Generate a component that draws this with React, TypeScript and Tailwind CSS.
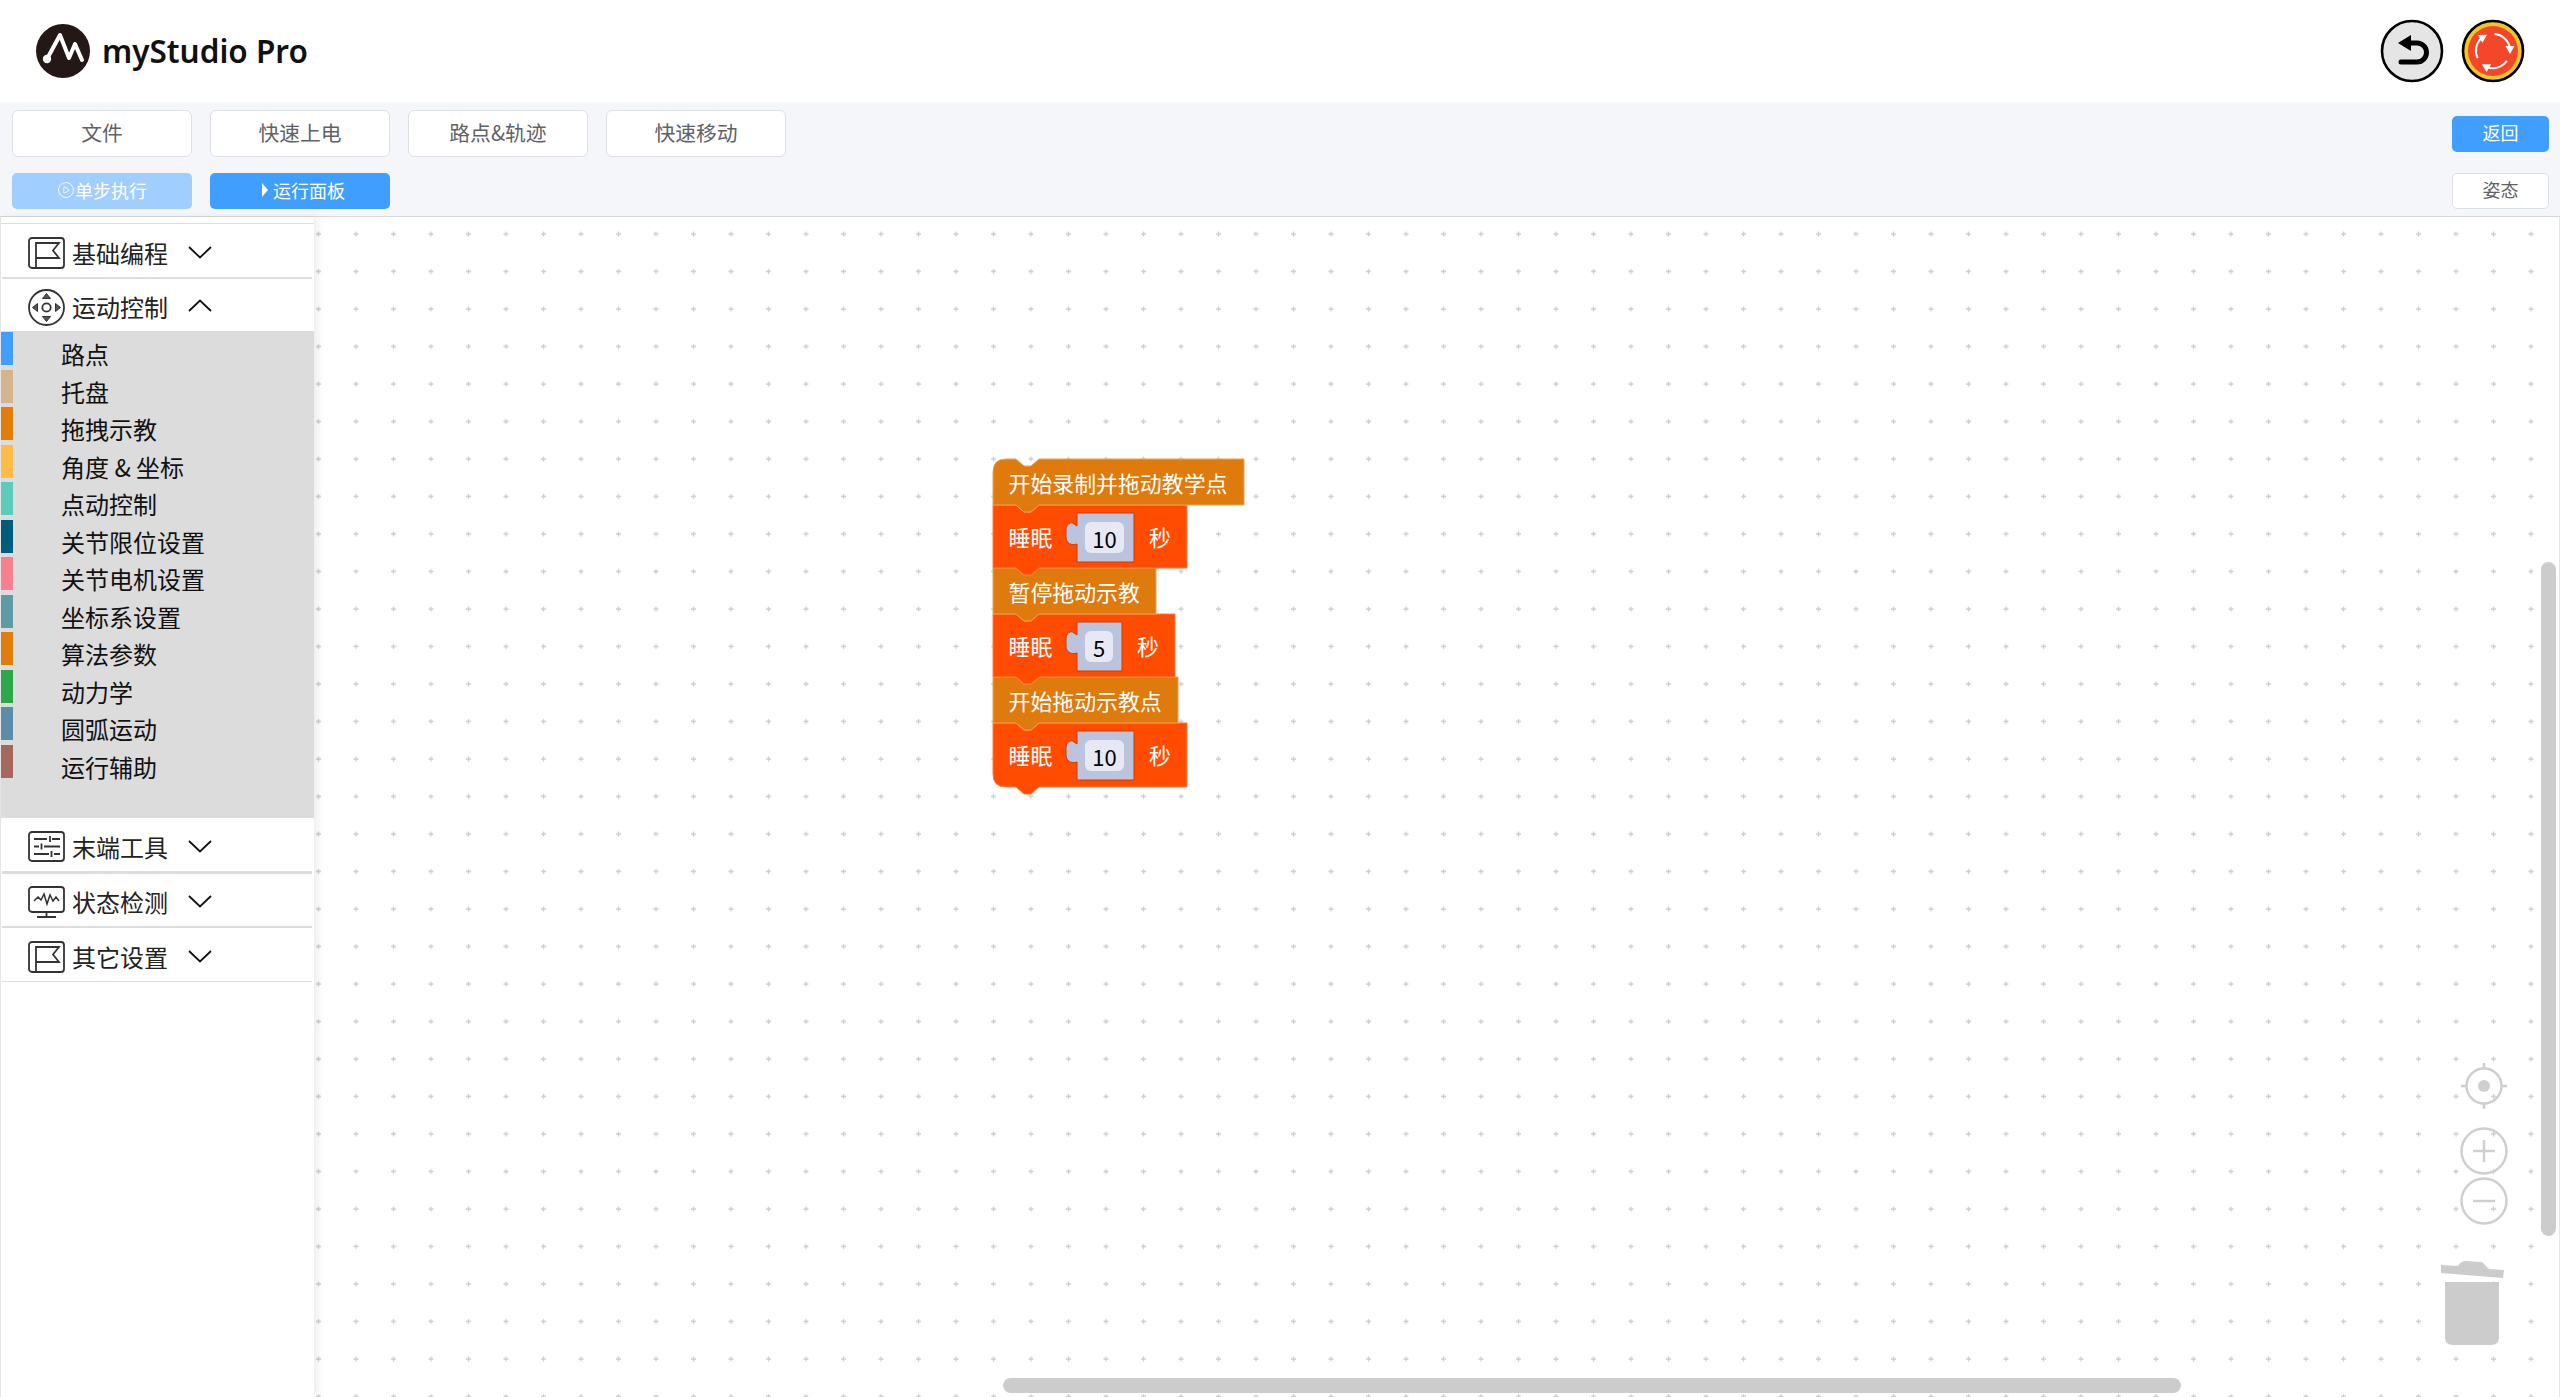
import React from 'react';
import { CirclePlay } from 'lucide-react';

const menuButtons = ['文件', '快速上电', '路点&轨迹', '快速移动'];

const categories = [
    { label: '路点', color: 'bg-[#409eff]' },
    { label: '托盘', color: 'bg-[#d3b48e]' },
    { label: '拖拽示教', color: 'bg-[#e27d0a]' },
    { label: '角度 & 坐标', color: 'bg-[#ffbb47]' },
    { label: '点动控制', color: 'bg-[#5dcbb9]' },
    { label: '关节限位设置', color: 'bg-[#005c7d]' },
    { label: '关节电机设置', color: 'bg-[#f77f90]' },
    { label: '坐标系设置', color: 'bg-[#5f9ba7]' },
    { label: '算法参数', color: 'bg-[#e17d0c]' },
    { label: '动力学', color: 'bg-[#2ca84a]' },
    { label: '圆弧运动', color: 'bg-[#5d8ca8]' },
    { label: '运行辅助', color: 'bg-[#a5675e]' },
];

const Logo = () => (
    <svg width="54" height="54" viewBox="-27 -27 54 54">
        <circle r="27" fill="#231815" />
        <path d="M-16 8 L-3 -16 L6 7 L12 -7 L19 9" fill="none" stroke="#fff" strokeWidth="4" strokeLinejoin="round" strokeLinecap="round" />
        <circle cx="-16" cy="8" r="4.200" fill="#fff" />
    </svg>
);

const UndoButton = () => (
    <svg width="64" height="64" viewBox="-32 -32 64 64">
        <circle r="30" fill="#e5e5e5" stroke="#000" strokeWidth="2.6" />
        <path d="M-6 -8 H5 A9.500 9.500 0 0 1 5 11 H-11" fill="none" stroke="#000" strokeWidth="5" strokeLinecap="round" />
        <path d="M-14 -8 L-1 -16 V0 Z" fill="#000" />
    </svg>
);

const ResetButton = () => (
    <svg width="64" height="64" viewBox="-32 -32 64 64">
        <circle r="30" fill="#f0c528" stroke="#000" strokeWidth="2.6" />
        <circle r="25" fill="#f4472a" />
        {[0, 120, 240].map((deg) => (
            <g key={deg} transform={`rotate(${deg})`}>
                <path d="M1.5 -16.9 A17 17 0 0 1 17 -3" fill="none" stroke="#fff" strokeWidth="2" />
                <path d="M12.500 -5 L21.500 -5 L17 3 Z" fill="#fff" />
            </g>
        ))}
    </svg>
);

const FlagIcon = () => (
    <svg width="37" height="32" viewBox="0 0 37 32" fill="none" stroke="#333" strokeWidth="1.8">
        <rect x="1" y="1" width="35" height="30" rx="3" />
        <path d="M8 31 V6 H31 L25 13.5 L31 21 H8" />
    </svg>
);

const DpadIcon = () => (
    <svg width="37" height="37" viewBox="-18.5 -18.5 37 37" fill="none" stroke="#333" strokeWidth="1.8">
        <circle r="17.5" />
        <circle r="4.2" />
        <path d="M0 -14 L4 -9 H-4 Z M0 14 L4 9 H-4 Z" fill="#555" strokeWidth="1" />
        <path d="M-14 0 L-9 -4 V4 Z M14 0 L9 -4 V4 Z" fill="#555" strokeWidth="1" />
    </svg>
);

const SlidersIcon = () => (
    <svg width="37" height="31" viewBox="0 0 37 31" fill="none" stroke="#333" strokeWidth="1.8">
        <rect x="1" y="1" width="35" height="29" rx="3" />
        <path d="M6 8 H19 M24 8 H32 M22 5 V11 M6 15.5 H11 M16 15.5 H32 M13.500 12.500 V18.500 M6 23 H21 M26 23 H32 M23.500 20 V26" />
    </svg>
);

const MonitorIcon = () => (
    <svg width="37" height="32" viewBox="0 0 37 32" fill="none" stroke="#333" strokeWidth="1.8">
        <rect x="1" y="1" width="35" height="25" rx="3" />
        <path d="M18.500 26 V31 M9 31 H28" />
        <path d="M6 15 L10 11 L13 14 L16 8 L19 18 L22 9 L25 15 L28 11 L31 15" strokeWidth="1.5" />
    </svg>
);

const Chevron = ({ up = false }: { up?: boolean }) => (
    <svg width="24" height="13" viewBox="0 0 24 13" fill="none" stroke="#111" strokeWidth="1.8">
        <path d={up ? 'M1 12 L12 1.500 L23 12' : 'M1 1 L12 11.500 L23 1'} />
    </svg>
);

const SectionHeader = ({ icon, label, up, className }: { icon: React.ReactNode; label: string; up?: boolean; className: string }) => (
    <div className={`ml-[1px] w-[310px] bg-white flex items-center pl-[26px] pt-[4px] ${className}`}>
        <div className="w-[37px] flex justify-center">{icon}</div>
        <span className="ml-[7px] text-[24px] leading-[32px] text-[#222]">{label}</span>
        <div className={`ml-[20px] ${up ? 'mb-[4px]' : 'mb-[1px]'}`}>
            <Chevron up={up} />
        </div>
    </div>
);

const Sidebar = () => (
    <aside className="w-[314px] flex flex-col bg-white border-l border-[#e5e5e5] shadow-[4px_0_7px_rgba(0,0,0,0.07)] z-10">
        <div className="h-[7px] border-b border-[#dddddd]" />
        <SectionHeader icon={<FlagIcon />} label="基础编程" className="h-[55px] border-b-2 border-[#dddddd]" />
        <SectionHeader icon={<DpadIcon />} label="运动控制" up className="h-[52px]" />
        <div className="h-[487px] bg-[#dcdcdc] pt-px">
            {categories.map((item) => (
                <div key={item.label} className="h-[37.5px] flex items-start">
                    <div className={`w-[12px] h-[33px] ${item.color}`} />
                    <span className="ml-[48px] mt-[5px] text-[24px] leading-[33px] text-[#111]">{item.label}</span>
                </div>
            ))}
        </div>
        <SectionHeader icon={<SlidersIcon />} label="末端工具" className="h-[56px] border-b-[3px] border-[#dddddd]" />
        <SectionHeader icon={<MonitorIcon />} label="状态检测" className="h-[54px] border-b-2 border-[#dddddd]" />
        <SectionHeader icon={<FlagIcon />} label="其它设置" className="h-[54px] border-b border-[#dddddd]" />
    </aside>
);

// page coordinates, the svg viewBox below is cut from the page
const NOTCH_L = 1016;
const NOTCH_M1 = 1024;
const NOTCH_M2 = 1031;
const NOTCH_R = 1039;

type BlockDef = {
    top: number;
    bottom: number;
    right: number;
    kind: 'hat' | 'stack' | 'last';
    label: string;
    value?: string;
    inputRight?: number;
    fieldRight?: number;
    unitX?: number;
};

const blocks: BlockDef[] = [
    { top: 459, bottom: 505, right: 1244, kind: 'hat', label: '开始录制并拖动教学点' },
    { top: 505, bottom: 568, right: 1187, kind: 'stack', label: '睡眠', value: '10', inputRight: 1134, fieldRight: 1124, unitX: 1149 },
    { top: 568, bottom: 614, right: 1156, kind: 'stack', label: '暂停拖动示教' },
    { top: 614, bottom: 677, right: 1175, kind: 'stack', label: '睡眠', value: '5', inputRight: 1122, fieldRight: 1113, unitX: 1137 },
    { top: 677, bottom: 723, right: 1178, kind: 'stack', label: '开始拖动示教点' },
    { top: 723, bottom: 787, right: 1187, kind: 'last', label: '睡眠', value: '10', inputRight: 1134, fieldRight: 1124, unitX: 1149 },
];

const blockPath = (b: BlockDef) => {
    const x = 993;
    const topEdge =
        b.kind === 'hat'
            ? `M${x} ${b.top + 13} Q${x} ${b.top} ${x + 13} ${b.top}`
            : `M${x} ${b.top}`;
    const notch = `H${NOTCH_L} L${NOTCH_M1} ${b.top + 7} H${NOTCH_M2} L${NOTCH_R} ${b.top}`;
    const tab = `H${NOTCH_R} L${NOTCH_M2} ${b.bottom + 7} H${NOTCH_M1} L${NOTCH_L} ${b.bottom}`;
    const close = b.kind === 'last' ? `H${x + 13} Q${x} ${b.bottom} ${x} ${b.bottom - 13} Z` : `H${x} Z`;
    return `${topEdge} ${notch} H${b.right} V${b.bottom} ${tab} ${close}`;
};

const inputPath = (x: number, y: number, r: number, b: number) =>
    `M${x} ${y} H${r} V${b} H${x} V${y + 31} C${x - 6} ${y + 33} ${x - 11} ${y + 30} ${x - 11} ${y + 24} V${y + 17} C${x - 11} ${y + 11} ${x - 6} ${y + 8} ${x - 3} ${y + 11} L${x} ${y + 13} Z`;

const BlockStack = () => (
    <svg
        className="absolute left-[671px] top-[233px]"
        width="600"
        height="350"
        viewBox="985 450 600 350"
        fontFamily="'Noto Sans CJK SC', 'Noto Sans', sans-serif"
    >
        {[...blocks].reverse().map((b, i) => {
            const isOrange = !b.value;
            const midY = isOrange ? b.top + 23.5 : b.top + 31.5;
            return (
                <g key={i}>
                    <path
                        d={blockPath(b)}
                        fill={isOrange ? '#df7a0d' : '#ff4c00'}
                        stroke={isOrange ? '#e9a35a' : '#ff7a40'}
                        strokeWidth="1"
                    />
                    <text x="1008.500" y={midY} fontSize="21.900" fill="#fff" dominantBaseline="central">
                        {b.label}
                    </text>
                    {b.value && (
                        <>
                            <path d={inputPath(1077, b.top + 8, b.inputRight!, b.top + 57)} fill="#bcc3dc" stroke="#cc3d00" strokeWidth="1" />
                            <rect x="1085" y={b.top + 17} width={b.fieldRight! - 1085} height="31" rx="6" fill="#e6e9f3" />
                            <text
                                x={(1085 + b.fieldRight!) / 2}
                                y={b.top + 33}
                                fontSize="22"
                                fill="#000"
                                textAnchor="middle"
                                dominantBaseline="central"
                            >
                                {b.value}
                            </text>
                            <text x={b.unitX} y={midY} fontSize="21.900" fill="#fff" dominantBaseline="central">
                                秒
                            </text>
                        </>
                    )}
                </g>
            );
        })}
    </svg>
);

const ZoomControls = () => (
    <svg className="absolute left-[2116px] top-[833px]" width="100" height="310" viewBox="2430 1050 100 310" fill="none" stroke="#cfcfcf" strokeWidth="2.500">
        <circle cx="2484" cy="1086" r="17.500" />
        <circle cx="2484" cy="1086" r="6" fill="#cfcfcf" stroke="none" />
        <path d="M2484 1063 V1069 M2484 1103 V1109 M2461 1086 H2467 M2501 1086 H2507" />
        <circle cx="2484" cy="1151" r="22.500" />
        <path d="M2473 1151 H2495 M2484 1140 V1162" />
        <circle cx="2484" cy="1201" r="22.500" />
        <path d="M2473 1201 H2495" />
        <path d="M2441 1265 L2458 1266 Q2461 1261 2466 1261 L2482 1262 Q2486 1266 2489 1269 L2504 1270 L2503 1278 L2441 1273 Z" fill="#cccccc" stroke="none" />
        <path d="M2445 1282 H2499 V1337 Q2499 1345 2491 1345 H2453 Q2445 1345 2445 1337 Z" fill="#cccccc" stroke="none" />
    </svg>
);

const Workspace = () => (
    <main className="relative flex-1 overflow-hidden bg-white border-r border-[#e5e5e5]">
        <svg className="absolute inset-0 w-full h-full">
            <defs>
                <pattern id="grid" width="37.500" height="37.500" patternUnits="userSpaceOnUse">
                    <path d="M2 17 H7 M4.500 14.500 V19.500" stroke="#cccccc" strokeWidth="1.300" />
                </pattern>
            </defs>
            <rect width="100%" height="100%" fill="url(#grid)" />
        </svg>
        <BlockStack />
        <ZoomControls />
        <div className="absolute right-[3px] top-[345px] w-[15px] h-[674px] rounded-full bg-[#cccccc]" />
        <div className="absolute left-[689px] bottom-[4px] w-[1178px] h-[15px] rounded-full bg-[#cccccc]" />
    </main>
);

export default function App() {
    return (
        <div className="h-screen flex flex-col overflow-hidden bg-white font-['Noto_Sans_CJK_SC','Noto_Sans',sans-serif]">
            <header className="h-[102px] flex items-center justify-between pl-[36px] pr-[35px]">
                <div className="flex items-center gap-[12px]">
                    <Logo />
                    <span className="text-[31.5px] font-semibold text-[#111] font-['Noto_Sans',sans-serif]">myStudio Pro</span>
                </div>
                <div className="flex items-center gap-[17px]">
                    <UndoButton />
                    <ResetButton />
                </div>
            </header>

            <div className="h-[115px] bg-[#f5f6fa] border-b border-[#d8d8dc] flex justify-between pl-[12px] pr-[11px]">
                <div className="pt-[8px] flex flex-col gap-[16px]">
                    <div className="flex gap-[18px]">
                        {menuButtons.map((label) => (
                            <button
                                key={label}
                                className="w-[180px] h-[47px] pb-[2px] bg-white border border-[#dcdfe6] rounded-[6px] text-[20.8px] text-[#606266]"
                            >
                                {label}
                            </button>
                        ))}
                    </div>
                    <div className="flex gap-[18px]">
                        <button className="w-[180px] h-[36px] pb-[2px] bg-[#a0cfff] rounded-[5px] text-[18px] text-white flex items-center justify-center">
                            <CirclePlay size={18} strokeWidth={1.2} />
                            单步执行
                        </button>
                        <button className="w-[180px] h-[36px] pb-[2px] pl-[7px] bg-[#409eff] rounded-[5px] text-[18px] text-white flex items-center justify-center gap-[5px]">
                            <svg width="6" height="14" viewBox="0 0 6 14">
                                <path d="M0 0 L6 7 L0 14 Z" fill="#fff" />
                            </svg>
                            运行面板
                        </button>
                    </div>
                </div>
                <div className="pt-[14px] flex flex-col gap-[21px]">
                    <button className="w-[97px] h-[36px] pb-[3px] bg-[#409eff] rounded-[5px] text-[18px] text-white">返回</button>
                    <button className="w-[97px] h-[36px] pb-[3px] bg-white border border-[#dcdfe6] rounded-[5px] text-[18px] text-[#606266]">姿态</button>
                </div>
            </div>

            <div className="flex-1 flex min-h-0">
                <Sidebar />
                <Workspace />
            </div>
        </div>
    );
}
